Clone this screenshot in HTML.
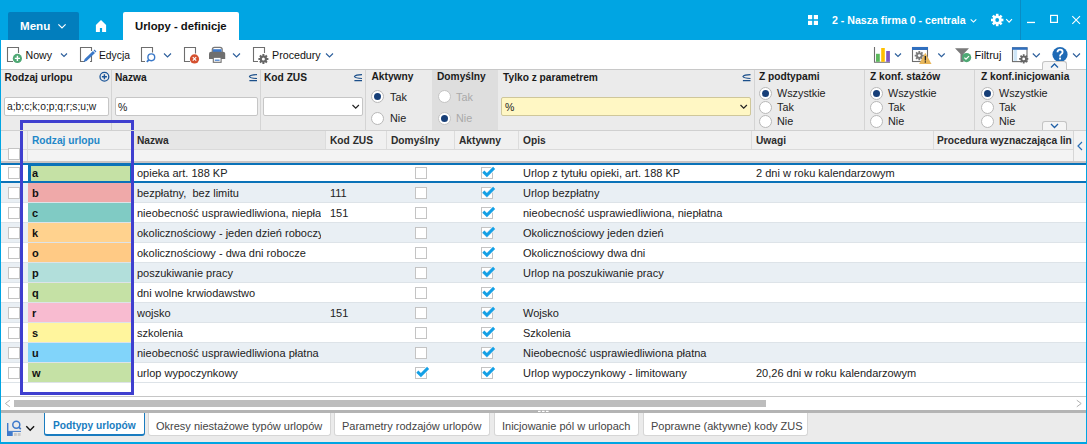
<!DOCTYPE html>
<html><head><meta charset="utf-8">
<style>
*{box-sizing:border-box;margin:0;padding:0}
html,body{width:1087px;height:444px;overflow:hidden;background:#fff;font-family:"Liberation Sans",sans-serif;font-size:11px;color:#222}
.a{position:absolute}
.t{position:absolute;white-space:pre;line-height:1}
.b{font-weight:bold}
svg{position:absolute;overflow:visible}
#top{left:0;top:0;width:1087px;height:40px;background:#00a5e3}
.chev{fill:none;stroke-width:1.15}
.sep{position:absolute;width:1px;background:#d4d4d4}
.radio{position:absolute;width:13px;height:13px;border-radius:50%;border:1px solid #b8b8b8;background:#fff}
.radio.on::after{content:"";position:absolute;left:2px;top:2px;width:7px;height:7px;border-radius:50%;background:#173f78}
.inp{position:absolute;background:#fff;border:1px solid #c6c6c6;border-radius:2px}
.cb{position:absolute;width:12px;height:12px;border:1px solid #c4c4c4;background:#fff}
.row{position:absolute;left:1px;width:1085px;height:20px}
.cell{position:absolute;top:0;height:19px}
.tab{position:absolute;top:413px;height:23px;background:#fff;border:1px solid #d6d6d6;border-top:none;border-radius:0 0 3px 3px;color:#444}
</style></head><body>
<!-- TOP BAR -->
<div id="top" class="a"></div>
<div class="a" style="left:8px;top:12px;width:71px;height:28px;background:#027ebd;border-radius:2px 2px 0 0"></div>
<div class="t b" style="left:20px;top:20px;font-size:11.6px;color:#fff">Menu</div>
<svg style="left:0;top:0" width="1087" height="40">
  <path d="M58.4 24.4 L62 28 L65.6 24.4" stroke="#fff" class="chev"/>
  <path d="M101 20.1 L106.1 25 L106.1 32 L102.1 32 L102.1 28.1 L99.9 28.1 L99.9 32 L95.9 32 L95.9 25 Z" fill="#fff"/>
  <rect x="808" y="15" width="4.2" height="4.2" fill="#fff"/><rect x="813.8" y="15" width="4.2" height="4.2" fill="#fff"/>
  <rect x="808" y="20.8" width="4.2" height="4.2" fill="#fff"/><rect x="813.8" y="20.8" width="4.2" height="4.2" fill="#fff"/>
  <path d="M970.7 19.3 L973.5 22.1 L976.3 19.3" stroke="#fff" stroke-width="1.05" fill="none"/>
  <path d="M1006.2 19.2 L1009.1 22.1 L1012 19.2" stroke="#fff" stroke-width="1.1" fill="none"/>
  <rect x="1020" y="0" width="1" height="40" fill="#0a8cc4"/>
  <rect x="1027" y="21.8" width="8" height="1.3" fill="#fff"/>
  <rect x="1050.6" y="15.4" width="6.8" height="7" fill="none" stroke="#fff" stroke-width="1.2"/>
  <path d="M1072.3 16.2 L1080 23.8 M1080 16.2 L1072.3 23.8" stroke="#fff" stroke-width="1.1"/>
  <g transform="translate(997.2 20)" fill="#fff"><circle r="4.6"/><g id="teeth"><rect x="-1.3" y="-6.2" width="2.6" height="12.4"/><rect x="-6.2" y="-1.3" width="12.4" height="2.6"/><rect x="-1.3" y="-6.2" width="2.6" height="12.4" transform="rotate(45)"/><rect x="-1.3" y="-6.2" width="2.6" height="12.4" transform="rotate(-45)"/></g><circle r="1.9" fill="#00a5e3"/></g>
</svg>
<div class="a" style="left:123px;top:12px;width:116px;height:28px;background:#fff;border-radius:2px 2px 0 0"></div>
<div class="t b" style="left:135px;top:20.5px;font-size:11.3px;color:#111">Urlopy - definicje</div>
<div class="t b" style="left:832px;top:15px;font-size:10.6px;color:#fff">2 - Nasza firma 0 - centrala</div>

<!-- FRAME BORDERS -->
<div class="a" style="left:0;top:40px;width:1px;height:404px;background:#00a5e3"></div>
<div class="a" style="left:1086px;top:40px;width:1px;height:404px;background:#00a5e3"></div>
<div class="a" style="left:0;top:442px;width:1087px;height:2px;background:#00a5e3"></div>

<!-- TOOLBAR -->
<div class="a" style="left:1px;top:69px;width:1085px;height:1px;background:#c8c8c8"></div>
<svg style="left:0;top:40px" width="1087" height="30">
  <!-- Nowy -->
  <path d="M13 21.5 L7.5 21.5 L7.5 7.5 L18.5 7.5 L18.5 13" fill="none" stroke="#6e6e6e" stroke-width="1.1"/>
  <circle cx="17.4" cy="18.4" r="4.6" fill="#4ea874"/>
  <path d="M17.4 15.8 V21 M14.8 18.4 H20" stroke="#fff" stroke-width="1.4"/>
  <path d="M61 13.5 L64 16.5 L67 13.5" stroke="#2d5f9c" class="chev"/>
  <!-- Edycja -->
  <path d="M85 21.5 L80.5 21.5 L80.5 7.5 L91.5 7.5 L91.5 11" fill="none" stroke="#6e6e6e" stroke-width="1.1"/>
  <path d="M91.5 14 L91.5 21.5 L90 21.5" fill="none" stroke="#6e6e6e" stroke-width="1.1"/>
  <path d="M83.5 22 L84.7 18.9 L93 11 L95 13 L86.6 20.9 Z" fill="#3a78c8"/>
  <path d="M93.6 10.4 L94.5 9.6 L96.4 11.6 L95.6 12.4 Z" fill="#3a78c8"/>
  <!-- Search -->
  <path d="M145 21.5 L141.5 21.5 L141.5 7.5 L152.5 7.5 L152.5 12.5" fill="none" stroke="#6e6e6e" stroke-width="1.1"/>
  <circle cx="151.3" cy="17.3" r="3.4" fill="none" stroke="#3a78c8" stroke-width="1.4"/>
  <path d="M148.8 19.8 L146.8 21.8" stroke="#3a78c8" stroke-width="1.8"/>
  <path d="M164 13.5 L167.5 17 L171 13.5" stroke="#2d5f9c" class="chev"/>
  <!-- Delete -->
  <path d="M190 21.5 L184.5 21.5 L184.5 7.5 L195.5 7.5 L195.5 13.5" fill="none" stroke="#6e6e6e" stroke-width="1.1"/>
  <circle cx="194.5" cy="18.9" r="4.6" fill="#d5502f"/>
  <path d="M192.8 17.2 L196.2 20.6 M196.2 17.2 L192.8 20.6" stroke="#fff" stroke-width="1.2"/>
  <!-- Print -->
  <path d="M212.3 12 L212.3 9.5 Q212.3 7.3 214.5 7.3 L220 7.3 Q222.2 7.3 222.2 9.5 L222.2 12" fill="none" stroke="#777" stroke-width="1.2"/>
  <rect x="212.9" y="9.2" width="8.7" height="4.3" fill="#3f7acb"/>
  <path d="M209 13.8 Q209 11.8 211 11.8 L223.2 11.8 Q225.2 11.8 225.2 13.8 L225.2 18.9 L209 18.9 Z" fill="#6f6f6f"/>
  <rect x="213.3" y="17.3" width="7.8" height="5" fill="#fff" stroke="#6f6f6f" stroke-width="1.1"/>
  <rect x="214.8" y="19.6" width="4.8" height="1.2" fill="#3f7acb"/>
  <path d="M233 13.5 L236.5 17 L240 13.5" stroke="#2d5f9c" class="chev"/>
  <!-- Procedury -->
  <path d="M258 21.5 L253.5 21.5 L253.5 7.5 L264.5 7.5 L264.5 13" fill="none" stroke="#6e6e6e" stroke-width="1.1"/>
  <g transform="translate(263.4 19)"><circle r="3.6" fill="#666"/><path d="M0 -5 V5 M-5 0 H5 M-3.5 -3.5 L3.5 3.5 M3.5 -3.5 L-3.5 3.5" stroke="#666" stroke-width="2"/><circle r="1.5" fill="#fff"/></g>
  <path d="M326 13.5 L329.5 17 L333 13.5" stroke="#2d5f9c" class="chev"/>
  <!-- Chart -->
  <path d="M874.5 7 L874.5 22.3 L890 22.3" fill="none" stroke="#6e6e6e" stroke-width="1.1"/>
  <rect x="876" y="13.8" width="3.8" height="8" fill="#5cb85c"/>
  <rect x="881.2" y="8" width="3.6" height="13.8" fill="#ffc000"/>
  <rect x="886.2" y="11" width="3.7" height="10.8" fill="#7e57c2"/>
  <path d="M895 13.5 L898 16.5 L901 13.5" stroke="#2d5f9c" class="chev"/>
  <!-- Window gear warning -->
  <rect x="912.5" y="7.5" width="15" height="14" fill="#fff" stroke="#6e6e6e" stroke-width="1.1"/>
  <rect x="912" y="7" width="16" height="3" fill="#2f6fbf"/>
  <g transform="translate(919.3 15.6)"><circle r="3.2" fill="#7a7a7a"/><path d="M0 -4.6 V4.6 M-4.6 0 H4.6 M-3.2 -3.2 L3.2 3.2 M3.2 -3.2 L-3.2 3.2" stroke="#7a7a7a" stroke-width="1.8"/><circle r="1.4" fill="#fff"/></g>
  <path d="M925.3 12.8 L931.5 24 L919.1 24 Z" fill="#e8b65a"/>
  <rect x="924.7" y="16" width="1.3" height="4.5" fill="#222"/><rect x="924.7" y="21.3" width="1.3" height="1.3" fill="#222"/>
  <path d="M938.3 13.5 L941.5 16.7 L944.7 13.5" stroke="#2d5f9c" class="chev"/>
  <!-- Filter -->
  <path d="M955 8.2 L969 8.2 L963.5 14 L963.5 22 L960.5 22 L960.5 14 Z" fill="#7a7a7a"/>
  <circle cx="966.6" cy="17.6" r="4.6" fill="#4ea874"/>
  <path d="M964.4 17.6 L966 19.2 L969 16.2" fill="none" stroke="#fff" stroke-width="1.2"/>
  <!-- Window gear -->
  <rect x="1012.5" y="7.8" width="14.5" height="13.8" fill="#fff" stroke="#6e6e6e" stroke-width="1.1"/>
  <rect x="1012" y="7.3" width="15.5" height="2.5" fill="#2f6fbf"/>
  <rect x="1013.6" y="10" width="3.5" height="11" fill="#cfe6f7"/>
  <g transform="translate(1023.7 18.9)"><circle r="3.2" fill="#666"/><path d="M0 -4.6 V4.6 M-4.6 0 H4.6 M-3.2 -3.2 L3.2 3.2 M3.2 -3.2 L-3.2 3.2" stroke="#666" stroke-width="1.8"/><circle r="1.4" fill="#fff"/></g>
  <path d="M1032.8 13.5 L1036.3 17 L1039.8 13.5" stroke="#2d5f9c" class="chev"/>
  <!-- Help -->
  <circle cx="1060" cy="14.5" r="7.6" fill="#1f6ab5"/>
  <path d="M1057.5 12.3 Q1057.5 9.6 1060 9.6 Q1062.6 9.6 1062.6 12 Q1062.6 13.4 1061 14.3 Q1060 14.9 1060 16.5" fill="none" stroke="#fff" stroke-width="1.8"/>
  <rect x="1059.1" y="17.6" width="1.9" height="1.9" fill="#fff"/>
  <path d="M1073 13.5 L1076.5 17 L1080 13.5" stroke="#2d5f9c" class="chev"/>
</svg>
<div class="t" style="left:25.5px;top:49.5px;font-size:10.6px;color:#111">Nowy</div>
<div class="t" style="left:99px;top:51px;font-size:10.3px;color:#111">Edycja</div>
<div class="t" style="left:272px;top:50px;font-size:10.7px;color:#111">Procedury</div>
<div class="t" style="left:974.5px;top:49.5px;font-size:11px;color:#111">Filtruj</div>

<!-- FILTER AREA -->
<div class="a" style="left:1px;top:70px;width:1085px;height:60px;background:#ebebeb"></div>
<div class="a" style="left:432px;top:70px;width:66px;height:60px;background:#dedede"></div>
<div class="sep" style="left:111px;top:70px;height:60px"></div>
<div class="sep" style="left:260px;top:70px;height:60px"></div>
<div class="sep" style="left:365px;top:70px;height:60px"></div>
<div class="sep" style="left:754px;top:70px;height:60px"></div>
<div class="sep" style="left:864px;top:70px;height:60px"></div>
<div class="sep" style="left:974px;top:70px;height:60px"></div>
<div class="t b" style="left:4.5px;top:73px;font-size:10.2px;color:#1a1a1a">Rodzaj urlopu</div>
<div class="t b" style="left:115px;top:73px;font-size:10.2px;color:#1a1a1a">Nazwa</div>
<div class="t b" style="left:264px;top:73px;font-size:10.2px;color:#1a1a1a">Kod ZUS</div>
<div class="t b" style="left:371.5px;top:72px;font-size:10.2px;color:#1a1a1a">Aktywny</div>
<div class="t b" style="left:437px;top:72px;font-size:10.2px;color:#1a1a1a">Domyślny</div>
<div class="t b" style="left:503px;top:73px;font-size:10.2px;color:#1a1a1a">Tylko z parametrem</div>
<div class="t b" style="left:759px;top:72px;font-size:10.2px;color:#1a1a1a">Z podtypami</div>
<div class="t b" style="left:870px;top:72px;font-size:10.2px;color:#1a1a1a">Z konf. stażów</div>
<div class="t b" style="left:981px;top:72px;font-size:10.2px;color:#1a1a1a">Z konf.inicjowania</div>
<svg style="left:0;top:0" width="1087" height="140">
  <circle cx="104.4" cy="76.8" r="4.4" fill="none" stroke="#1b5598" stroke-width="1.3"/>
  <path d="M104.4 74.3 V79.3 M101.9 76.8 H106.9" stroke="#1b5598" stroke-width="1.4"/>
  <g stroke="#1b4f8a" stroke-width="1.05" fill="none">
    <path d="M257 74.6 Q250.5 74.6 249.4 76.6 Q250.5 78.5 257 78.5 M249.4 80.6 H257"/>
    <path d="M362 74.6 Q355.5 74.6 354.4 76.6 Q355.5 78.5 362 78.5 M354.4 80.6 H362"/>
    <path d="M750.5 74.6 Q744 74.6 742.9 76.6 Q744 78.5 750.5 78.5 M742.9 80.6 H750.5"/>
  </g>
</svg>
<div class="inp" style="left:3.5px;top:97px;width:105px;height:18.5px"></div>
<div class="t" style="left:7px;top:102px;font-size:10.3px;color:#1a1a1a">a;b;c;k;o;p;q;r;s;u;w</div>
<div class="inp" style="left:114.5px;top:97px;width:143px;height:18.5px"></div>
<div class="t" style="left:118px;top:102px;font-size:10.5px;color:#1a1a1a">%</div>
<div class="inp" style="left:263px;top:97px;width:99.5px;height:18.5px"></div>
<div class="inp" style="left:501px;top:97px;width:249.5px;height:18.5px;background:#fff7c4;border-color:#cfc79a"></div>
<div class="t" style="left:505px;top:102px;font-size:10.5px;color:#1a1a1a">%</div>
<svg style="left:0;top:0" width="1087" height="140">
  <path d="M352.5 105 L355.7 108.2 L358.9 105" fill="none" stroke="#222" stroke-width="1.2"/>
  <path d="M740.5 105 L743.7 108.2 L746.9 105" fill="none" stroke="#222" stroke-width="1.2"/>
</svg>
<div class="radio on" style="left:370.5px;top:90px"></div>
<div class="radio" style="left:370.5px;top:111.5px"></div>
<div class="t" style="left:390px;top:91.5px;font-size:10.8px;color:#222">Tak</div>
<div class="t" style="left:390px;top:112.5px;font-size:10.8px;color:#222">Nie</div>
<div class="radio" style="left:437.5px;top:90px;border-color:#c4c4c4"></div>
<div class="radio on" style="left:437.5px;top:111.5px;border-color:#c4c4c4"></div>
<div class="t" style="left:456px;top:91.5px;font-size:10.8px;color:#a9a9a9">Tak</div>
<div class="t" style="left:456px;top:112.5px;font-size:10.8px;color:#a9a9a9">Nie</div>
<div class="radio on" style="left:759px;top:87px"></div>
<div class="radio" style="left:759px;top:101px"></div>
<div class="radio" style="left:759px;top:115px"></div>
<div class="t" style="left:777px;top:88px;font-size:10.8px;color:#222">Wszystkie</div>
<div class="t" style="left:777px;top:102px;font-size:10.8px;color:#222">Tak</div>
<div class="t" style="left:777px;top:116px;font-size:10.8px;color:#222">Nie</div>
<div class="radio on" style="left:870px;top:87px"></div>
<div class="radio" style="left:870px;top:101px"></div>
<div class="radio" style="left:870px;top:115px"></div>
<div class="t" style="left:888px;top:88px;font-size:10.8px;color:#222">Wszystkie</div>
<div class="t" style="left:888px;top:102px;font-size:10.8px;color:#222">Tak</div>
<div class="t" style="left:888px;top:116px;font-size:10.8px;color:#222">Nie</div>
<div class="radio on" style="left:981px;top:87px"></div>
<div class="radio" style="left:981px;top:101px"></div>
<div class="radio" style="left:981px;top:115px"></div>
<div class="t" style="left:999px;top:88px;font-size:10.8px;color:#222">Wszystkie</div>
<div class="t" style="left:999px;top:102px;font-size:10.8px;color:#222">Tak</div>
<div class="t" style="left:999px;top:116px;font-size:10.8px;color:#222">Nie</div>
<div class="a" style="left:1042px;top:60.5px;width:25px;height:9px;background:#f5f5f5;border:1px solid #c4c4c4;border-bottom:none;border-radius:3px 3px 0 0"></div>
<div class="a" style="left:1042px;top:121px;width:25px;height:9px;background:#f5f5f5;border:1px solid #c4c4c4;border-bottom:none;border-radius:3px 3px 0 0"></div>
<svg style="left:0;top:0" width="1087" height="140">
  <path d="M1051 67.5 L1054.5 64 L1058 67.5" fill="none" stroke="#1f5fa6" stroke-width="1.3"/>
  <path d="M1051 124 L1054.5 127.5 L1058 124" fill="none" stroke="#1f5fa6" stroke-width="1.3"/>
</svg>

<!-- GRIDSTART -->
<!-- GRID -->
<div class="a" style="left:1px;top:131px;width:1072px;height:18px;background:#f0f0f0"></div>
<div class="a" style="left:133px;top:131px;width:192px;height:18px;background:#e6e6e6"></div>
<div class="a" style="left:1px;top:149px;width:1072px;height:1px;background:#dadada"></div>
<div class="a" style="left:1px;top:150px;width:1072px;height:11px;background:#f3f3f3"></div>
<div class="a" style="left:1073px;top:131px;width:13px;height:30px;background:#f3f3f3;border-left:1px solid #d6d6d6"></div>
<div class="a" style="left:1px;top:161px;width:1085px;height:2px;background:#c9c4c4"></div>
<div class="sep" style="left:27px;top:131px;height:30px;background:#dcdcdc"></div>
<div class="sep" style="left:133px;top:131px;height:18px;background:#dcdcdc"></div>
<div class="sep" style="left:325px;top:131px;height:18px;background:#dcdcdc"></div>
<div class="sep" style="left:386px;top:131px;height:18px;background:#dcdcdc"></div>
<div class="sep" style="left:454px;top:131px;height:18px;background:#dcdcdc"></div>
<div class="sep" style="left:518px;top:131px;height:18px;background:#dcdcdc"></div>
<div class="sep" style="left:751px;top:131px;height:18px;background:#dcdcdc"></div>
<div class="sep" style="left:933px;top:131px;height:18px;background:#dcdcdc"></div>
<div class="cb" style="left:8px;top:148px;width:12px;height:12px"></div>
<div class="t b" style="left:32px;top:136px;font-size:10.2px;color:#1f87c8;">Rodzaj urlopu</div>
<div class="t b" style="left:137px;top:136px;font-size:10.2px;color:#2b2b2b;">Nazwa</div>
<div class="t b" style="left:330px;top:136px;font-size:10.2px;color:#2b2b2b;">Kod ZUS</div>
<div class="t b" style="left:391px;top:136px;font-size:10.2px;color:#2b2b2b;">Domyślny</div>
<div class="t b" style="left:459px;top:136px;font-size:10.2px;color:#2b2b2b;">Aktywny</div>
<div class="t b" style="left:523px;top:136px;font-size:10.2px;color:#2b2b2b;">Opis</div>
<div class="t b" style="left:756px;top:136px;font-size:10.2px;color:#2b2b2b;">Uwagi</div>
<div class="t b" style="left:937px;top:136px;font-size:10.2px;color:#2b2b2b;width:135px;overflow:hidden;">Procedura wyznaczająca lin</div>
<svg style="left:0;top:0" width="1087" height="170"><path d="M1082 142 L1078 146 L1082 150" fill="none" stroke="#2a6db5" stroke-width="1.2"/></svg>
<div class="row" style="top:163px;height:19px;background:#fff"></div>
<div class="a" style="left:28px;top:163px;width:105px;height:19.5px;background:#c5e1a5;border:3px solid #0a72b8;border-bottom-width:2.5px"></div>
<div class="cb" style="left:8px;top:167px"></div>
<div class="t b" style="left:32px;top:168px;font-size:11px;color:#111">a</div>
<div class="t" style="left:137px;top:168px;font-size:11px;color:#222;width:184px;overflow:hidden">opieka art. 188 KP</div>
<div class="cb" style="left:415px;top:167px"></div>
<div class="cb" style="left:481px;top:167px"></div>
<svg style="left:481px;top:167px" width="14" height="14"><path d="M2.3 4.6 L5.9 8.1 L13.1 0.9" fill="none" stroke="#fff" stroke-width="4.6"/><path d="M2.3 4.6 L5.9 8.1 L13.1 0.9" fill="none" stroke="#14a0e6" stroke-width="2.9"/></svg>
<div class="t" style="left:523px;top:168px;font-size:11px;color:#222">Urlop z tytułu opieki, art. 188 KP</div>
<div class="t" style="left:756px;top:168px;font-size:11px;color:#222">2 dni w roku kalendarzowym</div>
<div class="row" style="top:183px;height:20px;background:#e9eff4"></div>
<div class="a" style="left:1px;top:202px;width:1085px;height:1px;background:#dde3e8"></div>
<div class="a" style="left:28px;top:183px;width:103px;height:19px;background:#efa9a9"></div>
<div class="cb" style="left:8px;top:187px"></div>
<div class="t b" style="left:32px;top:188px;font-size:11px;color:#111">b</div>
<div class="t" style="left:137px;top:188px;font-size:11px;color:#222;width:184px;overflow:hidden">bezpłatny,  bez limitu</div>
<div class="t" style="left:330px;top:188px;font-size:11px;color:#222">111</div>
<div class="cb" style="left:415px;top:187px"></div>
<div class="cb" style="left:481px;top:187px"></div>
<svg style="left:481px;top:187px" width="14" height="14"><path d="M2.3 4.6 L5.9 8.1 L13.1 0.9" fill="none" stroke="#e9eff4" stroke-width="4.6"/><path d="M2.3 4.6 L5.9 8.1 L13.1 0.9" fill="none" stroke="#14a0e6" stroke-width="2.9"/></svg>
<div class="t" style="left:523px;top:188px;font-size:11px;color:#222">Urlop bezpłatny</div>
<div class="row" style="top:203px;height:20px;background:#fff"></div>
<div class="a" style="left:1px;top:222px;width:1085px;height:1px;background:#dde3e8"></div>
<div class="a" style="left:28px;top:203px;width:103px;height:19px;background:#80cbc4"></div>
<div class="cb" style="left:8px;top:207px"></div>
<div class="t b" style="left:32px;top:208px;font-size:11px;color:#111">c</div>
<div class="t" style="left:137px;top:208px;font-size:11px;color:#222;width:184px;overflow:hidden">nieobecność usprawiedliwiona, niepłatna</div>
<div class="t" style="left:330px;top:208px;font-size:11px;color:#222">151</div>
<div class="cb" style="left:415px;top:207px"></div>
<div class="cb" style="left:481px;top:207px"></div>
<svg style="left:481px;top:207px" width="14" height="14"><path d="M2.3 4.6 L5.9 8.1 L13.1 0.9" fill="none" stroke="#fff" stroke-width="4.6"/><path d="M2.3 4.6 L5.9 8.1 L13.1 0.9" fill="none" stroke="#14a0e6" stroke-width="2.9"/></svg>
<div class="t" style="left:523px;top:208px;font-size:11px;color:#222">nieobecność usprawiedliwiona, niepłatna</div>
<div class="row" style="top:223px;height:20px;background:#e9eff4"></div>
<div class="a" style="left:1px;top:242px;width:1085px;height:1px;background:#dde3e8"></div>
<div class="a" style="left:28px;top:223px;width:103px;height:19px;background:#ffd28e"></div>
<div class="cb" style="left:8px;top:227px"></div>
<div class="t b" style="left:32px;top:228px;font-size:11px;color:#111">k</div>
<div class="t" style="left:137px;top:228px;font-size:11px;color:#222;width:184px;overflow:hidden">okolicznościowy - jeden dzień roboczy</div>
<div class="cb" style="left:415px;top:227px"></div>
<div class="cb" style="left:481px;top:227px"></div>
<svg style="left:481px;top:227px" width="14" height="14"><path d="M2.3 4.6 L5.9 8.1 L13.1 0.9" fill="none" stroke="#e9eff4" stroke-width="4.6"/><path d="M2.3 4.6 L5.9 8.1 L13.1 0.9" fill="none" stroke="#14a0e6" stroke-width="2.9"/></svg>
<div class="t" style="left:523px;top:228px;font-size:11px;color:#222">Okolicznościowy jeden dzień</div>
<div class="row" style="top:243px;height:20px;background:#fff"></div>
<div class="a" style="left:1px;top:262px;width:1085px;height:1px;background:#dde3e8"></div>
<div class="a" style="left:28px;top:243px;width:103px;height:19px;background:#ffca85"></div>
<div class="cb" style="left:8px;top:247px"></div>
<div class="t b" style="left:32px;top:248px;font-size:11px;color:#111">o</div>
<div class="t" style="left:137px;top:248px;font-size:11px;color:#222;width:184px;overflow:hidden">okolicznościowy - dwa dni robocze</div>
<div class="cb" style="left:415px;top:247px"></div>
<div class="cb" style="left:481px;top:247px"></div>
<svg style="left:481px;top:247px" width="14" height="14"><path d="M2.3 4.6 L5.9 8.1 L13.1 0.9" fill="none" stroke="#fff" stroke-width="4.6"/><path d="M2.3 4.6 L5.9 8.1 L13.1 0.9" fill="none" stroke="#14a0e6" stroke-width="2.9"/></svg>
<div class="t" style="left:523px;top:248px;font-size:11px;color:#222">Okolicznościowy dwa dni</div>
<div class="row" style="top:263px;height:20px;background:#e9eff4"></div>
<div class="a" style="left:1px;top:282px;width:1085px;height:1px;background:#dde3e8"></div>
<div class="a" style="left:28px;top:263px;width:103px;height:19px;background:#b2dfdb"></div>
<div class="cb" style="left:8px;top:267px"></div>
<div class="t b" style="left:32px;top:268px;font-size:11px;color:#111">p</div>
<div class="t" style="left:137px;top:268px;font-size:11px;color:#222;width:184px;overflow:hidden">poszukiwanie pracy</div>
<div class="cb" style="left:415px;top:267px"></div>
<div class="cb" style="left:481px;top:267px"></div>
<svg style="left:481px;top:267px" width="14" height="14"><path d="M2.3 4.6 L5.9 8.1 L13.1 0.9" fill="none" stroke="#e9eff4" stroke-width="4.6"/><path d="M2.3 4.6 L5.9 8.1 L13.1 0.9" fill="none" stroke="#14a0e6" stroke-width="2.9"/></svg>
<div class="t" style="left:523px;top:268px;font-size:11px;color:#222">Urlop na poszukiwanie pracy</div>
<div class="row" style="top:283px;height:20px;background:#fff"></div>
<div class="a" style="left:1px;top:302px;width:1085px;height:1px;background:#dde3e8"></div>
<div class="a" style="left:28px;top:283px;width:103px;height:19px;background:#c5e1a5"></div>
<div class="cb" style="left:8px;top:287px"></div>
<div class="t b" style="left:32px;top:288px;font-size:11px;color:#111">q</div>
<div class="t" style="left:137px;top:288px;font-size:11px;color:#222;width:184px;overflow:hidden">dni wolne krwiodawstwo</div>
<div class="cb" style="left:415px;top:287px"></div>
<div class="cb" style="left:481px;top:287px"></div>
<svg style="left:481px;top:287px" width="14" height="14"><path d="M2.3 4.6 L5.9 8.1 L13.1 0.9" fill="none" stroke="#fff" stroke-width="4.6"/><path d="M2.3 4.6 L5.9 8.1 L13.1 0.9" fill="none" stroke="#14a0e6" stroke-width="2.9"/></svg>
<div class="row" style="top:303px;height:20px;background:#e9eff4"></div>
<div class="a" style="left:1px;top:322px;width:1085px;height:1px;background:#dde3e8"></div>
<div class="a" style="left:28px;top:303px;width:103px;height:19px;background:#f8bbd0"></div>
<div class="cb" style="left:8px;top:307px"></div>
<div class="t b" style="left:32px;top:308px;font-size:11px;color:#111">r</div>
<div class="t" style="left:137px;top:308px;font-size:11px;color:#222;width:184px;overflow:hidden">wojsko</div>
<div class="t" style="left:330px;top:308px;font-size:11px;color:#222">151</div>
<div class="cb" style="left:415px;top:307px"></div>
<div class="cb" style="left:481px;top:307px"></div>
<svg style="left:481px;top:307px" width="14" height="14"><path d="M2.3 4.6 L5.9 8.1 L13.1 0.9" fill="none" stroke="#e9eff4" stroke-width="4.6"/><path d="M2.3 4.6 L5.9 8.1 L13.1 0.9" fill="none" stroke="#14a0e6" stroke-width="2.9"/></svg>
<div class="t" style="left:523px;top:308px;font-size:11px;color:#222">Wojsko</div>
<div class="row" style="top:323px;height:20px;background:#fff"></div>
<div class="a" style="left:1px;top:342px;width:1085px;height:1px;background:#dde3e8"></div>
<div class="a" style="left:28px;top:323px;width:103px;height:19px;background:#fff59d"></div>
<div class="cb" style="left:8px;top:327px"></div>
<div class="t b" style="left:32px;top:328px;font-size:11px;color:#111">s</div>
<div class="t" style="left:137px;top:328px;font-size:11px;color:#222;width:184px;overflow:hidden">szkolenia</div>
<div class="cb" style="left:415px;top:327px"></div>
<div class="cb" style="left:481px;top:327px"></div>
<svg style="left:481px;top:327px" width="14" height="14"><path d="M2.3 4.6 L5.9 8.1 L13.1 0.9" fill="none" stroke="#fff" stroke-width="4.6"/><path d="M2.3 4.6 L5.9 8.1 L13.1 0.9" fill="none" stroke="#14a0e6" stroke-width="2.9"/></svg>
<div class="t" style="left:523px;top:328px;font-size:11px;color:#222">Szkolenia</div>
<div class="row" style="top:343px;height:20px;background:#e9eff4"></div>
<div class="a" style="left:1px;top:362px;width:1085px;height:1px;background:#dde3e8"></div>
<div class="a" style="left:28px;top:343px;width:103px;height:19px;background:#81d4fa"></div>
<div class="cb" style="left:8px;top:347px"></div>
<div class="t b" style="left:32px;top:348px;font-size:11px;color:#111">u</div>
<div class="t" style="left:137px;top:348px;font-size:11px;color:#222;width:184px;overflow:hidden">nieobecność usprawiedliwiona płatna</div>
<div class="cb" style="left:415px;top:347px"></div>
<div class="cb" style="left:481px;top:347px"></div>
<svg style="left:481px;top:347px" width="14" height="14"><path d="M2.3 4.6 L5.9 8.1 L13.1 0.9" fill="none" stroke="#e9eff4" stroke-width="4.6"/><path d="M2.3 4.6 L5.9 8.1 L13.1 0.9" fill="none" stroke="#14a0e6" stroke-width="2.9"/></svg>
<div class="t" style="left:523px;top:348px;font-size:11px;color:#222">Nieobecność usprawiedliwiona płatna</div>
<div class="row" style="top:363px;height:20px;background:#fff"></div>
<div class="a" style="left:1px;top:382px;width:1085px;height:1px;background:#dde3e8"></div>
<div class="a" style="left:28px;top:363px;width:103px;height:19px;background:#c5e1a5"></div>
<div class="cb" style="left:8px;top:367px"></div>
<div class="t b" style="left:32px;top:368px;font-size:11px;color:#111">w</div>
<div class="t" style="left:137px;top:368px;font-size:11px;color:#222;width:184px;overflow:hidden">urlop wypoczynkowy</div>
<div class="cb" style="left:415px;top:367px"></div>
<div class="cb" style="left:481px;top:367px"></div>
<svg style="left:415px;top:367px" width="14" height="14"><path d="M2.3 4.6 L5.9 8.1 L13.1 0.9" fill="none" stroke="#fff" stroke-width="4.6"/><path d="M2.3 4.6 L5.9 8.1 L13.1 0.9" fill="none" stroke="#14a0e6" stroke-width="2.9"/></svg>
<svg style="left:481px;top:367px" width="14" height="14"><path d="M2.3 4.6 L5.9 8.1 L13.1 0.9" fill="none" stroke="#fff" stroke-width="4.6"/><path d="M2.3 4.6 L5.9 8.1 L13.1 0.9" fill="none" stroke="#14a0e6" stroke-width="2.9"/></svg>
<div class="t" style="left:523px;top:368px;font-size:11px;color:#222">Urlop wypoczynkowy - limitowany</div>
<div class="t" style="left:756px;top:368px;font-size:11px;color:#222">20,26 dni w roku kalendarzowym</div>
<div class="a" style="left:1px;top:163px;width:1085px;height:2px;background:#0a72b8"></div>
<div class="a" style="left:1px;top:180.5px;width:1085px;height:2px;background:#0a72b8"></div>
<div class="a" style="left:1px;top:383px;width:1085px;height:13px;background:#fff"></div>
<div class="a" style="left:1px;top:396px;width:1085px;height:1px;background:#c6c6c6"></div>
<div class="a" style="left:14px;top:400px;width:752px;height:7px;background:#bdbdbd"></div>
<svg style="left:0;top:0" width="1087" height="444"><path d="M9.8 400.2 L5.4 403.5 L9.8 406.8" fill="none" stroke="#b0b0b0" stroke-width="1"/><path d="M1076.8 400.2 L1081.2 403.5 L1076.8 406.8" fill="none" stroke="#b0b0b0" stroke-width="1"/></svg>
<div class="a" style="left:20px;top:119.5px;width:114px;height:275px;border:3px solid #3f3fcf"></div>
<!-- GRIDEND -->
<div class="a" style="left:1px;top:130px;width:1085px;height:1px;background:#d0d0d0"></div>

<!-- BOTTOM -->
<div class="a" style="left:1px;top:410px;width:1085px;height:3px;background:#b4b4b4"></div>
<div class="a" style="left:1px;top:413px;width:1085px;height:29px;background:#ebebeb"></div>
<svg style="left:0;top:0" width="1087" height="444">
  <rect x="7" y="423" width="1.4" height="13" fill="#3f7acb"/>
  <rect x="7" y="430.9" width="14" height="1" fill="#3f7acb"/>
  <rect x="7" y="431.8" width="5.7" height="4.2" fill="#3f7acb"/>
  <rect x="14" y="433" width="2.8" height="2.9" fill="#c9c9c9"/><rect x="17.7" y="433" width="2.9" height="2.9" fill="#c9c9c9"/>
  <circle cx="16.3" cy="424.8" r="3.5" fill="none" stroke="#3f7acb" stroke-width="1.5"/>
  <path d="M18.7 427.2 L20.8 429.2" stroke="#3f7acb" stroke-width="1.7"/>
  <path d="M26.3 426.3 L30.2 430.2 L34.1 426.3" fill="none" stroke="#111" stroke-width="1.4"/>
</svg>
<div class="tab" style="left:44px;width:101px;border-color:#1a7cc0;border-bottom-width:2px;border-radius:0 0 3px 3px"></div>
<div class="t b" style="left:53px;top:420.5px;font-size:10.2px;color:#1a7cc0">Podtypy urlopów</div>
<div class="tab" style="left:148px;width:182.5px"></div>
<div class="t" style="left:156px;top:420.5px;font-size:11px;color:#444">Okresy niestażowe typów urlopów</div>
<div class="tab" style="left:334px;width:156px"></div>
<div class="t" style="left:342px;top:420.5px;font-size:11px;color:#444">Parametry rodzajów urlopów</div>
<div class="tab" style="left:494px;width:145px"></div>
<div class="t" style="left:502px;top:420.5px;font-size:11px;color:#444">Inicjowanie pól w urlopach</div>
<div class="tab" style="left:643px;width:165px"></div>
<div class="t" style="left:651px;top:420.5px;font-size:11px;color:#444">Poprawne (aktywne) kody ZUS</div>
<svg style="left:0;top:0" width="1087" height="444"><g fill="#fff"><rect x="538" y="410.8" width="2.6" height="1.2"/><rect x="542" y="410.8" width="2.6" height="1.2"/><rect x="546" y="410.8" width="2.6" height="1.2"/></g></svg>
</body></html>
